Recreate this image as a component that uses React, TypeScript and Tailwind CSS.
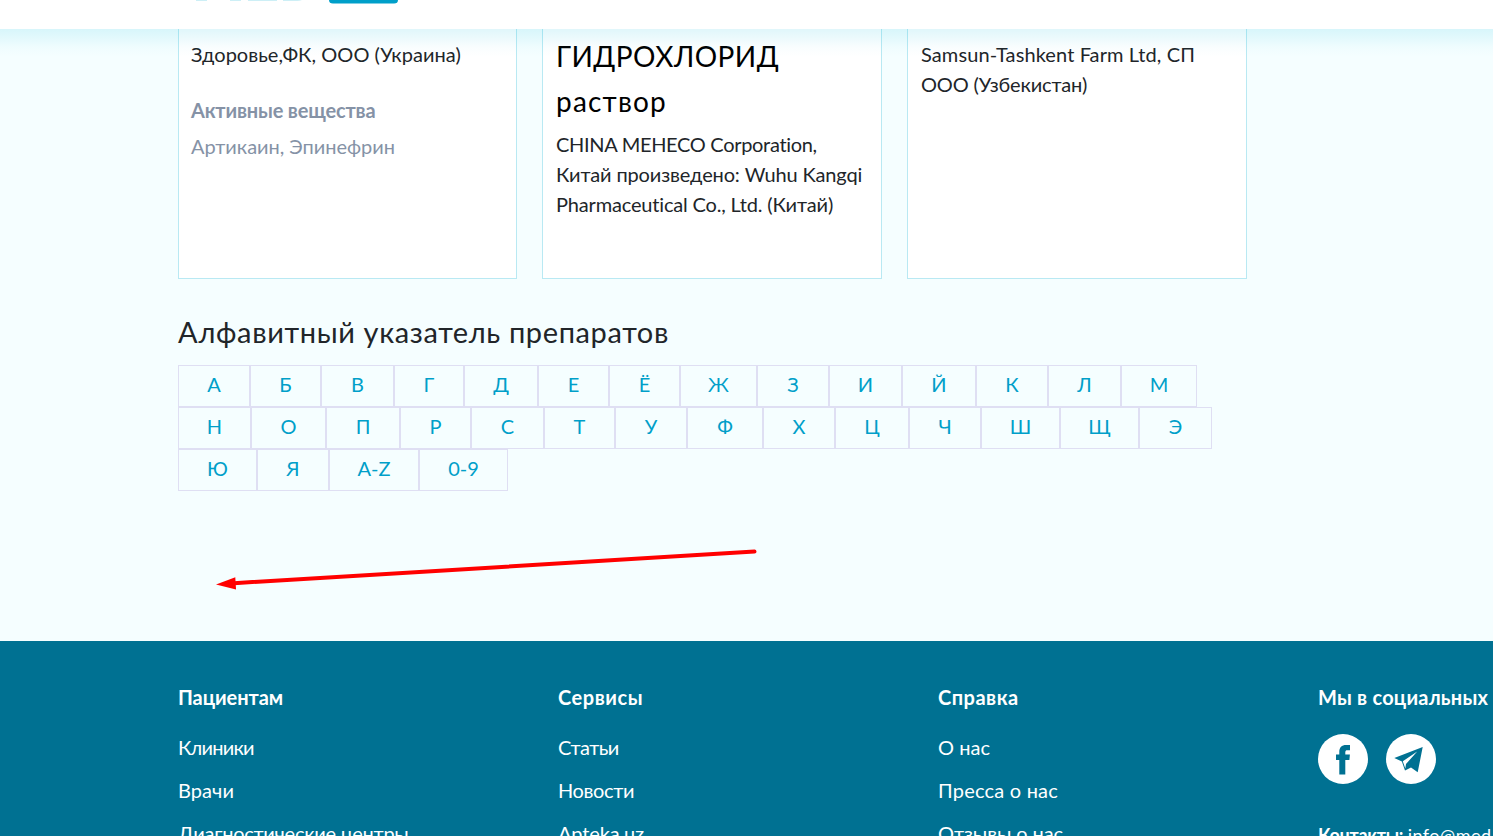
type Line = { text: string; tracking: number }

const alphabet: [string, number][][] = [
  [
    ['А', 72], ['Б', 71], ['В', 73], ['Г', 70], ['Д', 74], ['Е', 71], ['Ё', 71],
    ['Ж', 77], ['З', 72], ['И', 73], ['Й', 74], ['К', 72], ['Л', 73], ['М', 76],
  ],
  [
    ['Н', 73], ['О', 75], ['П', 74], ['Р', 71], ['С', 73], ['Т', 71], ['У', 72],
    ['Ф', 76], ['Х', 72], ['Ц', 74], ['Ч', 72], ['Ш', 79], ['Щ', 79], ['Э', 73],
  ],
  [['Ю', 79], ['Я', 72], ['A-Z', 90], ['0-9', 89]],
]

const footerColumns: { title: Line; links: Line[] }[] = [
  {
    title: { text: 'Пациентам', tracking: -0.07 },
    links: [
      { text: 'Клиники', tracking: -0.8 },
      { text: 'Врачи', tracking: 0.07 },
      { text: 'Диагностические центры', tracking: -0.27 },
    ],
  },
  {
    title: { text: 'Сервисы', tracking: 0.54 },
    links: [
      { text: 'Статьи', tracking: -0.5 },
      { text: 'Новости', tracking: -0.38 },
      { text: 'Apteka.uz', tracking: -0.14 },
    ],
  },
  {
    title: { text: 'Справка', tracking: 0.5 },
    links: [
      { text: 'О нас', tracking: 0.02 },
      { text: 'Пресса о нас', tracking: 0.21 },
      { text: 'Отзывы о нас', tracking: -0.1 },
    ],
  },
]

function Tracked({ text, tracking }: Line) {
  return <span style={{ letterSpacing: `${tracking}px` }}>{text}</span>
}

function Header() {
  return (
    <header className="relative z-10 h-[29px] bg-white">
      <svg className="block" width="420" height="10" viewBox="0 0 420 10">
        <path d="M196 0h11v1h-11zM230 0h11v1h-11zM248 0h29v1h-29zM283 0h19q-2 1-5 1h-14z" fill="#cdeff6" />
        <path d="M329 0h69a4 3.5 0 0 1-4 3.5h-61a4 3.5 0 0 1-4-3.5z" fill="#009fc9" />
      </svg>
      {/* soft shadow falling over the cards */}
      <div className="pointer-events-none absolute inset-x-0 top-full h-[28px] bg-[linear-gradient(rgba(0,185,220,0.12),rgba(0,185,220,0.08)_30%,rgba(0,185,220,0.025)_65%,transparent)]" />
    </header>
  )
}

function Cards() {
  const card = 'h-[250px] border border-t-0 border-[#b9e9f3] bg-white'
  return (
    <div className="grid grid-cols-[339px_340px_340px] gap-x-[25px] text-xl leading-[30px]">
      <div className={`${card} pl-3 pt-[10px]`}>
        <p><Tracked text="Здоровье,ФК, ООО (Украина)" tracking={0.04} /></p>
        <p className="mt-[26px] font-bold text-[#8592a6]"><Tracked text="Активные вещества" tracking={-0.17} /></p>
        <p className="mt-[6px] text-[#8592a6]"><Tracked text="Артикаин, Эпинефрин" tracking={-0.04} /></p>
      </div>
      <div className={`${card} pl-[13px] pt-[5px]`}>
        <h3 className="mb-[5px] text-[28px] leading-[45px] text-black">
          <Tracked text="ГИДРОХЛОРИД" tracking={0.45} />
          <br />
          <Tracked text="раствор" tracking={1.2} />
        </h3>
        <p>
          <Tracked text="CHINA MEHECO Corporation," tracking={-0.31} />
          <br />
          <Tracked text="Китай произведено: Wuhu Kangqi" tracking={-0.15} />
          <br />
          <Tracked text="Pharmaceutical Co., Ltd. (Китай)" tracking={-0.17} />
        </p>
      </div>
      <div className={`${card} pl-[13px] pt-[10px]`}>
        <p>
          <Tracked text="Samsun-Tashkent Farm Ltd, СП" tracking={0.1} />
          <br />
          <Tracked text="ООО (Узбекистан)" tracking={-0.16} />
        </p>
      </div>
    </div>
  )
}

function AlphabetIndex() {
  return (
    <section className="pt-8">
      <h2 className="mb-3 text-[29px] leading-[42px]">
        <Tracked text="Алфавитный указатель препаратов" tracking={0.62} />
      </h2>
      {alphabet.map((row, i) => (
        <div key={i} className="flex">
          {row.map(([letter, width]) => (
            <a
              key={letter}
              className="h-[42px] shrink-0 border border-[#dfdff3] pt-[3px] text-center text-xl leading-[30px] text-[#009fc9]"
              style={{ width }}
            >
              {letter}
            </a>
          ))}
        </div>
      ))}
    </section>
  )
}

function Arrow() {
  return (
    <svg className="absolute left-[210px] top-[540px]" width="560" height="60" viewBox="210 540 560 60">
      <path d="M234 583.2 754.5 551.6" stroke="#ff0000" strokeWidth="4" strokeLinecap="round" />
      <path d="M216 584.5 235.3 577.3 236 589.5z" fill="#ff0000" />
    </svg>
  )
}

function Socials() {
  return (
    <div className="flex gap-[18px]">
      <svg width="50" height="50" viewBox="0 0 50 50">
        <circle cx="25" cy="25" r="25" fill="#fff" />
        <path
          d="M32 11h-3.8c-4.6 0-6.9 2.6-6.9 6.6v3H18V26h3.3v14.6h6V26h4.1l.5-5.4h-4.6v-2.2c0-1.5.6-2.1 2-2.1H32z"
          fill="#007192"
        />
      </svg>
      <svg width="50" height="50" viewBox="0 0 50 50">
        <circle cx="25" cy="25" r="25" fill="#fff" />
        <path d="M36.7 13 8.3 24l7.6 3.6 3.1 9 6-3 6.7 4.7z" fill="#007192" />
        <path d="M31.2 17.4 16.8 27.3l2.5 7.2.7-4.6z" fill="#fff" />
      </svg>
    </div>
  )
}

function Footer() {
  return (
    <footer className="grid h-[195px] grid-cols-[380px_380px_380px_1fr] overflow-hidden whitespace-nowrap bg-[#007192] pl-[178px] pt-[41px] text-xl leading-[30px] text-white">
      {footerColumns.map((col) => (
        <div key={col.title.text}>
          <h4 className="mb-5 font-bold"><Tracked {...col.title} /></h4>
          <ul className="flex flex-col gap-[13px]">
            {col.links.map((link) => (
              <li key={link.text}><Tracked {...link} /></li>
            ))}
          </ul>
        </div>
      ))}
      <div className="w-[175px] overflow-hidden">
        <h4 className="mb-[22px] font-bold"><Tracked text="Мы в социальных" tracking={0.22} /></h4>
        <Socials />
        <p className="mt-[36px] text-lg leading-[30px]">
          <b><Tracked text="Контакты:" tracking={-0.3} /></b> <Tracked text="info@med" tracking={0.5} />
        </p>
      </div>
    </footer>
  )
}

export default function App() {
  return (
    <div className="relative flex h-[836px] w-[1493px] flex-col overflow-hidden bg-[#f5feff] font-['Lato','Noto_Sans',sans-serif] text-[#212529]">
      <Header />
      <main className="h-[612px] pl-[178px]">
        <Cards />
        <AlphabetIndex />
      </main>
      <Arrow />
      <Footer />
    </div>
  )
}
